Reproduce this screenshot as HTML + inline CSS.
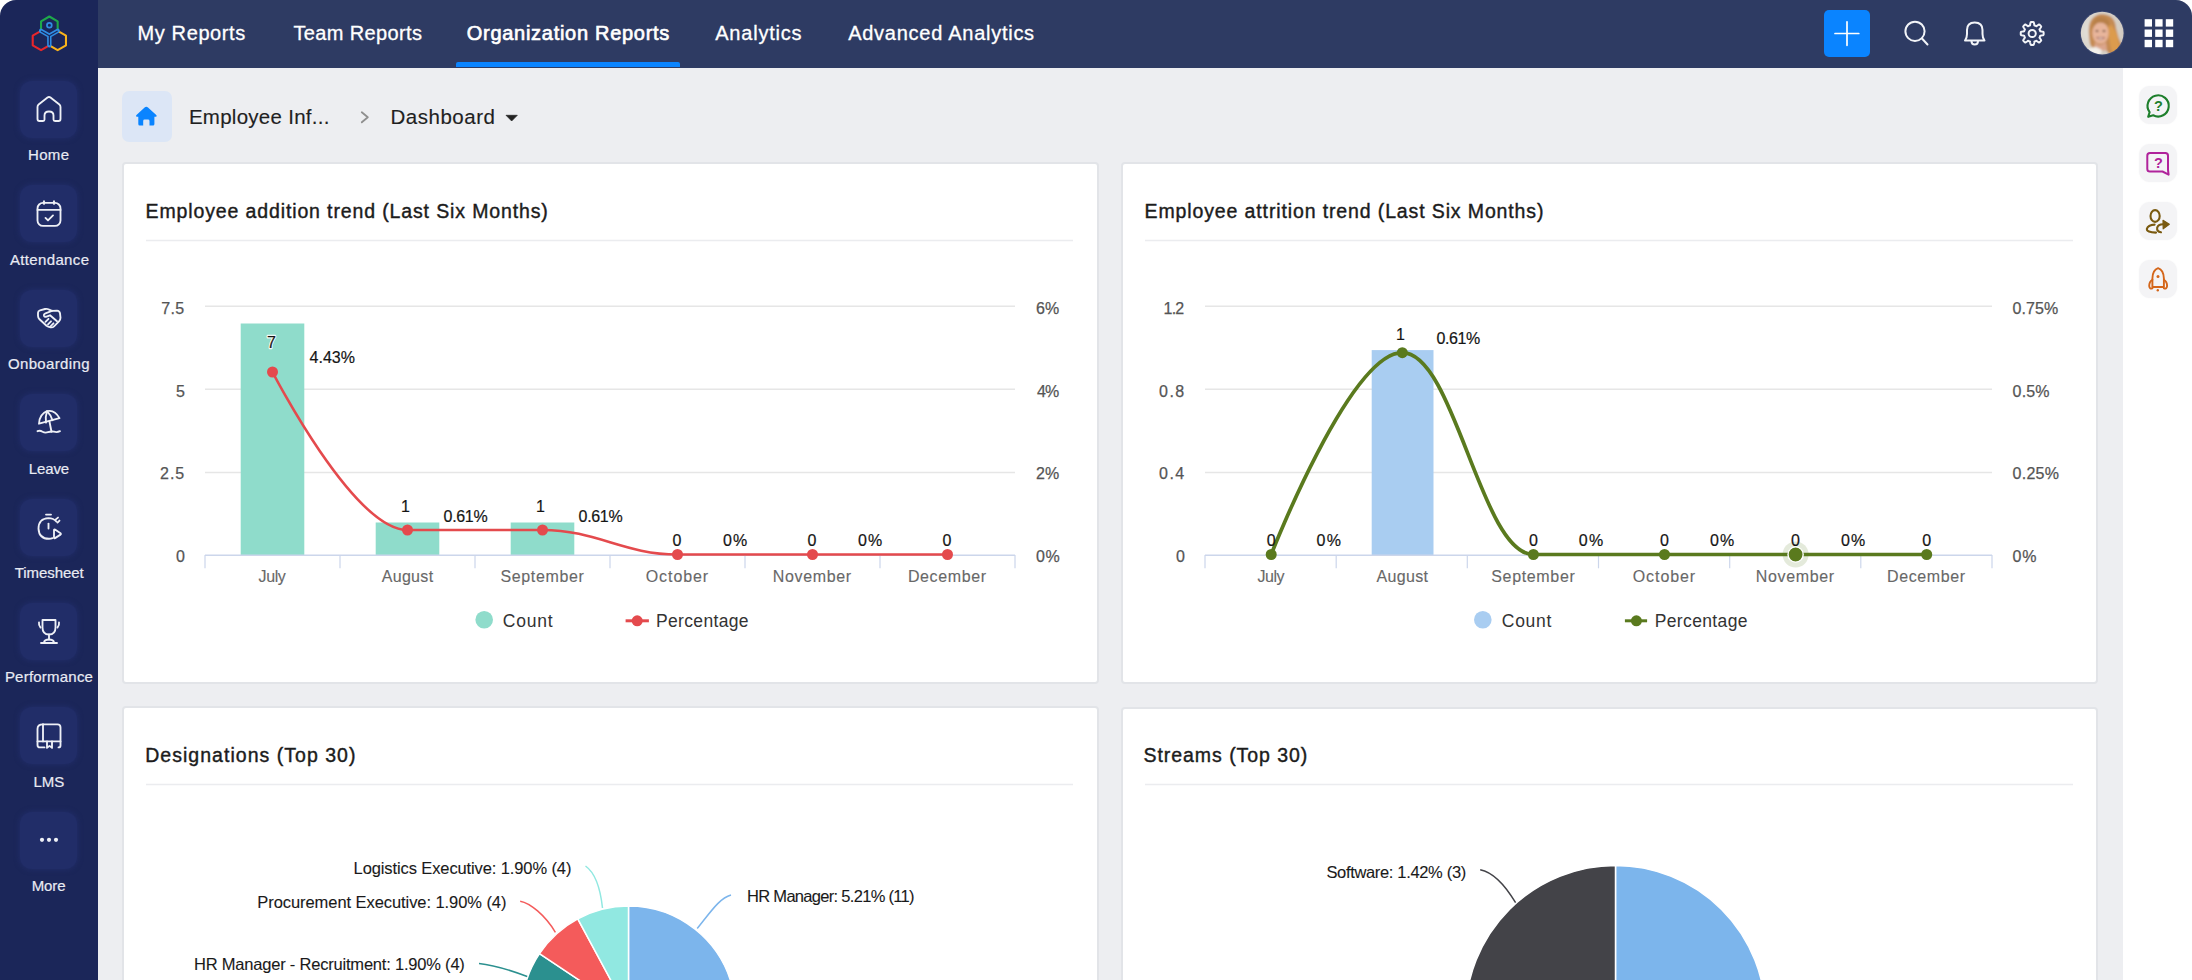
<!DOCTYPE html>
<html><head><meta charset='utf-8'><style>
*{margin:0;padding:0;box-sizing:border-box}
html,body{width:2192px;height:980px;overflow:hidden;background:#fff;font-family:"Liberation Sans", sans-serif}
.abs{position:absolute}
#app{position:absolute;left:0;top:0;width:2192px;height:980px;overflow:hidden;border-radius:16px 16px 0 0;background:#edeef1}
#sb{position:absolute;left:0;top:0;width:98px;height:980px;background:#1b2659}
#nav{position:absolute;left:98px;top:0;width:2094px;height:68px;background:#2e3b63}
#rp{position:absolute;left:2123px;top:68px;width:69px;height:912px;background:#ffffff}
.sbbox{position:absolute;left:20px;width:57px;height:57px;border-radius:12px;background:#212d68;box-shadow:0 0 5px 1px rgba(33,45,104,0.9)}
.card{position:absolute;background:#fff;border:2px solid #e2e4e8;border-radius:4px}
.rpbox{position:absolute;left:2139px;width:38px;height:38px;border-radius:11px;background:#f4f4f6;box-shadow:0 0 2px rgba(0,0,0,0.04)}
svg text{font-family:"Liberation Sans", sans-serif}
</style></head><body>
<div id='app'>
<div id='sb'></div>
<div id='nav'></div>
<div id='rp'></div>

<div class='sbbox' style='top:81.0px'></div>
<div class='sbbox' style='top:185.4px'></div>
<div class='sbbox' style='top:289.8px'></div>
<div class='sbbox' style='top:394.2px'></div>
<div class='sbbox' style='top:498.6px'></div>
<div class='sbbox' style='top:603.0px'></div>
<div class='sbbox' style='top:707.4px'></div>
<div class='sbbox' style='top:811.8px'></div>
<div class='abs' style='left:456px;top:62px;width:224px;height:5px;background:#0a84ff;border-radius:2px 2px 0 0'></div>
<div class='abs' style='left:122px;top:91px;width:50px;height:51px;border-radius:7px;background:#dce6f6'></div>
<div class='abs' style='left:1824px;top:10px;width:46px;height:47px;border-radius:5px;background:#0a84ff'></div>
<div class='card' style='left:122px;top:162px;width:977px;height:522px'></div>
<div class='card' style='left:1121px;top:162px;width:977px;height:522px'></div>
<div class='card' style='left:122px;top:706px;width:977px;height:400px'></div>
<div class='card' style='left:1121px;top:707px;width:977px;height:400px'></div>
<div class='rpbox' style='top:86px'></div>
<div class='rpbox' style='top:144px'></div>
<div class='rpbox' style='top:202px'></div>
<div class='rpbox' style='top:260px'></div>
<svg class='abs' style='left:0;top:0' width='2192' height='980' viewBox='0 0 2192 980'>
<line x1='146' y1='240.5' x2='1073' y2='240.5' stroke='#ebecef' stroke-width='1.6'/>
<line x1='1145' y1='240.5' x2='2073' y2='240.5' stroke='#ebecef' stroke-width='1.6'/>
<line x1='146' y1='784.5' x2='1073' y2='784.5' stroke='#ebecef' stroke-width='1.6'/>
<line x1='1145' y1='784.5' x2='2073' y2='784.5' stroke='#ebecef' stroke-width='1.6'/>
<line x1='205' y1='306.2' x2='1015' y2='306.2' stroke='#e6e6e6' stroke-width='1.5'/>
<line x1='205' y1='389.3' x2='1015' y2='389.3' stroke='#e6e6e6' stroke-width='1.5'/>
<line x1='205' y1='472.4' x2='1015' y2='472.4' stroke='#e6e6e6' stroke-width='1.5'/>
<line x1='1205' y1='306.2' x2='1992' y2='306.2' stroke='#e6e6e6' stroke-width='1.5'/>
<line x1='1205' y1='389.3' x2='1992' y2='389.3' stroke='#e6e6e6' stroke-width='1.5'/>
<line x1='1205' y1='472.4' x2='1992' y2='472.4' stroke='#e6e6e6' stroke-width='1.5'/>
<rect x='240.7' y='323.5' width='63.6' height='231.6' fill='#8fdccb'/>
<rect x='375.7' y='522.5' width='63.6' height='32.6' fill='#8fdccb'/>
<rect x='510.7' y='522.5' width='63.6' height='32.6' fill='#8fdccb'/>
<rect x='1371.7' y='350.1' width='61.8' height='205.0' fill='#a9cdf1'/>
<line x1='205' y1='555.2' x2='1015' y2='555.2' stroke='#ccd6eb' stroke-width='1.5'/>
<line x1='205.0' y1='555' x2='205.0' y2='568.3' stroke='#ccd6eb' stroke-width='1.2'/>
<line x1='340.0' y1='555' x2='340.0' y2='568.3' stroke='#ccd6eb' stroke-width='1.2'/>
<line x1='475.0' y1='555' x2='475.0' y2='568.3' stroke='#ccd6eb' stroke-width='1.2'/>
<line x1='610.0' y1='555' x2='610.0' y2='568.3' stroke='#ccd6eb' stroke-width='1.2'/>
<line x1='745.0' y1='555' x2='745.0' y2='568.3' stroke='#ccd6eb' stroke-width='1.2'/>
<line x1='880.0' y1='555' x2='880.0' y2='568.3' stroke='#ccd6eb' stroke-width='1.2'/>
<line x1='1015.0' y1='555' x2='1015.0' y2='568.3' stroke='#ccd6eb' stroke-width='1.2'/>
<line x1='1205' y1='555.2' x2='1992' y2='555.2' stroke='#ccd6eb' stroke-width='1.5'/>
<line x1='1205.0' y1='555' x2='1205.0' y2='568.3' stroke='#ccd6eb' stroke-width='1.2'/>
<line x1='1336.2' y1='555' x2='1336.2' y2='568.3' stroke='#ccd6eb' stroke-width='1.2'/>
<line x1='1467.3' y1='555' x2='1467.3' y2='568.3' stroke='#ccd6eb' stroke-width='1.2'/>
<line x1='1598.5' y1='555' x2='1598.5' y2='568.3' stroke='#ccd6eb' stroke-width='1.2'/>
<line x1='1729.7' y1='555' x2='1729.7' y2='568.3' stroke='#ccd6eb' stroke-width='1.2'/>
<line x1='1860.8' y1='555' x2='1860.8' y2='568.3' stroke='#ccd6eb' stroke-width='1.2'/>
<line x1='1992.0' y1='555' x2='1992.0' y2='568.3' stroke='#ccd6eb' stroke-width='1.2'/>
<path d='M272.5,372.0 C272.5,372.0 353.5,530.0 407.5,530.0 C461.5,530.0 488.5,530.0 542.5,530.0 C596.5,530.0 623.5,554.5 677.5,554.5 C731.5,554.5 758.5,554.5 812.5,554.5 C866.5,554.5 947.5,554.5 947.5,554.5' fill='none' stroke='#e44a4d' stroke-width='2.6'/>
<circle cx='272.5' cy='372' r='5.5' fill='#e44a4d'/>
<circle cx='407.5' cy='530' r='5.5' fill='#e44a4d'/>
<circle cx='542.5' cy='530' r='5.5' fill='#e44a4d'/>
<circle cx='677.5' cy='554.5' r='5.5' fill='#e44a4d'/>
<circle cx='812.5' cy='554.5' r='5.5' fill='#e44a4d'/>
<circle cx='947.5' cy='554.5' r='5.5' fill='#e44a4d'/>
<path d='M1271.2,554.5 C1271.2,554.5 1349.9,352.7 1402.3,352.7 C1454.7,352.7 1481.0,554.5 1533.4,554.5 C1585.8,554.5 1612.1,554.5 1664.5,554.5 C1716.9,554.5 1743.2,554.5 1795.6,554.5 C1848.0,554.5 1926.7,554.5 1926.7,554.5' fill='none' stroke='#5a7a1e' stroke-width='3.7'/>
<circle cx='1271.2' cy='554.5' r='5.5' fill='#5a7a1e'/>
<circle cx='1402.3' cy='352.7' r='5.5' fill='#5a7a1e'/>
<circle cx='1533.4' cy='554.5' r='5.5' fill='#5a7a1e'/>
<circle cx='1664.5' cy='554.5' r='5.5' fill='#5a7a1e'/>
<circle cx='1795.6' cy='554.5' r='13' fill='#5a7a1e' fill-opacity='0.16'/>
<circle cx='1795.6' cy='554.5' r='7.6' fill='#5a7a1e' stroke='#ffffff' stroke-width='1.4'/>
<circle cx='1926.7' cy='554.5' r='5.5' fill='#5a7a1e'/>
<circle cx='484.2' cy='619.8' r='8.8' fill='#8fdccb'/>
<line x1='625.6' y1='620.8' x2='648.9' y2='620.8' stroke='#e44a4d' stroke-width='3'/>
<circle cx='637.2' cy='620.8' r='5.5' fill='#e44a4d'/>
<circle cx='1482.8' cy='619.8' r='8.8' fill='#a9cdf1'/>
<line x1='1624.9' y1='620.8' x2='1647.1' y2='620.8' stroke='#5a7a1e' stroke-width='3'/>
<circle cx='1636.4' cy='620.8' r='5.5' fill='#5a7a1e'/>
<path d='M628.50,1013.00 L628.50,906.00 A107,107 0 0 1 732.76,988.93 Z' fill='#7cb5ec' stroke='#ffffff' stroke-width='1.5' stroke-linejoin='round'/>
<path d='M628.50,1013.00 L732.76,988.93 A107,107 0 0 1 628.50,1120.00 Z' fill='#434348' stroke='#ffffff' stroke-width='1.5' stroke-linejoin='round'/>
<path d='M628.50,1013.00 L628.50,1120.00 A107,107 0 0 1 521.94,1003.30 Z' fill='#90ed7d' stroke='#ffffff' stroke-width='1.5' stroke-linejoin='round'/>
<path d='M628.50,1013.00 L521.94,1003.30 A107,107 0 0 1 539.48,953.63 Z' fill='#2b908f' stroke='#ffffff' stroke-width='1.5' stroke-linejoin='round'/>
<path d='M628.50,1013.00 L539.48,953.63 A107,107 0 0 1 577.77,918.79 Z' fill='#f45b5b' stroke='#ffffff' stroke-width='1.5' stroke-linejoin='round'/>
<path d='M628.50,1013.00 L577.77,918.79 A107,107 0 0 1 628.50,906.00 Z' fill='#91e8e1' stroke='#ffffff' stroke-width='1.5' stroke-linejoin='round'/>
<path d='M1615.50,1015.50 L1615.50,865.50 A150,150 0 0 1 1615.50,1165.50 Z' fill='#7cb5ec' stroke='#ffffff' stroke-width='1.5' stroke-linejoin='round'/>
<path d='M1615.50,1015.50 L1615.50,1165.50 A150,150 0 0 1 1615.50,865.50 Z' fill='#434348' stroke='#ffffff' stroke-width='1.5' stroke-linejoin='round'/>
<path d='M585.5,866 C594,872 600,885 602.5,908' fill='none' stroke='#91e8e1' stroke-width='1.5'/>
<path d='M520.2,901.2 C530,903 545,915 555.4,932.3' fill='none' stroke='#f45b5b' stroke-width='1.5'/>
<path d='M479,963.4 C495,965 510,970 527.2,976.5' fill='none' stroke='#2b908f' stroke-width='1.5'/>
<path d='M731,895 C720,898 712,910 697.2,928.5' fill='none' stroke='#7cb5ec' stroke-width='1.5'/>
<path d='M1480.2,869.7 C1492,872 1505,885 1515.6,902.7' fill='none' stroke='#434348' stroke-width='1.5'/>
<path d='M41.04,30.90 L41.04,21.30 L49.35,16.50 L57.66,21.30 L57.66,30.90' stroke='#1ea84a' fill='none' stroke-width='2.1' stroke-linejoin='round' stroke-linecap='round'/><path d='M41.04,30.90 L32.72,35.70 L32.72,45.30 L41.04,50.10 L49.35,45.30' stroke='#e8262b' fill='none' stroke-width='2.1' stroke-linejoin='round' stroke-linecap='round'/><path d='M57.66,30.90 L65.98,35.70 L65.98,45.30 L57.66,50.10 L49.35,45.30' stroke='#f9b31b' fill='none' stroke-width='2.1' stroke-linejoin='round' stroke-linecap='round'/><path d='M41.04,30.90 L49.35,35.70 L57.66,30.90 M49.35,35.70 L49.35,45.30' fill='none' stroke='#2f8de4' stroke-width='4.4' stroke-linejoin='round' stroke-linecap='round'/><path d='M41.04,30.90 L49.35,35.70 L57.66,30.90 M49.35,35.70 L49.35,45.30' fill='none' stroke='#1b2659' stroke-width='1.2' stroke-linejoin='round' stroke-linecap='butt'/><circle cx='49.35' cy='25.3' r='2.4' fill='none' stroke='#2f8de4' stroke-width='1.7'/><g transform='translate(36,96.0)'><path d='M1.5,11 Q1.5,9.5 2.6,8.5 L11.5,1.6 Q13,0.5 14.5,1.6 L23.4,8.5 Q24.5,9.5 24.5,11 L24.5,23 Q24.5,25 22.5,25 L19,25 Q17.5,25 17.5,23.5 L17.5,19.5 Q17.5,15.5 13,15.5 Q8.5,15.5 8.5,19.5 L8.5,23.5 Q8.5,25 7,25 L3.5,25 Q1.5,25 1.5,23 Z' fill='none' stroke='#eef0f6' stroke-width='1.85' stroke-linecap='round' stroke-linejoin='round'/></g><g transform='translate(36,200.4)'><rect x='1.5' y='2.5' width='23' height='23' rx='5.5' fill='none' stroke='#eef0f6' stroke-width='1.85' stroke-linecap='round' stroke-linejoin='round'/><line x1='1.5' y1='9.5' x2='24.5' y2='9.5' fill='none' stroke='#eef0f6' stroke-width='1.85' stroke-linecap='round' stroke-linejoin='round'/><line x1='8' y1='0.8' x2='8' y2='3.5' fill='none' stroke='#eef0f6' stroke-width='1.85' stroke-linecap='round' stroke-linejoin='round'/><line x1='18' y1='0.8' x2='18' y2='3.5' fill='none' stroke='#eef0f6' stroke-width='1.85' stroke-linecap='round' stroke-linejoin='round'/><path d='M9.5,17.5 L12,20 L17,15' fill='none' stroke='#eef0f6' stroke-width='1.85' stroke-linecap='round' stroke-linejoin='round'/></g><g transform='translate(36,304.8)'><path d='M2,8 Q2,6 4,5.5 L9,4.2 Q11,3.7 12.5,4.5 L16,6 L21,5.8 Q23.5,6 24,8.5 L24.5,13 Q24.5,15 23,16.5 L18,21.5 Q16.5,23 14.5,22.5 Q12,22 10.5,21 L3.5,14.5 Q2,13 2,11 Z' fill='none' stroke='#eef0f6' stroke-width='1.85' stroke-linecap='round' stroke-linejoin='round'/><path d='M16,6 L9.5,8.5 Q7.5,9.3 8,11 Q8.7,12.5 10.5,11.8 L14,10.5 L21,16.5' fill='none' stroke='#eef0f6' stroke-width='1.85' stroke-linecap='round' stroke-linejoin='round'/><path d='M12,19.5 L15,16.5 M14.5,21.5 L17.5,18.5 M9.5,17 L12.5,14' fill='none' stroke='#eef0f6' stroke-width='1.85' stroke-linecap='round' stroke-linejoin='round'/></g><g transform='translate(36,409.2)'><path d='M3,14.5 Q3.5,5 11,2 Q18.5,0 23.5,9 Z' fill='none' stroke='#eef0f6' stroke-width='1.85' stroke-linecap='round' stroke-linejoin='round'/><path d='M11,2 Q9,8 10,13.5 M11,2 Q15,6 16.5,11' fill='none' stroke='#eef0f6' stroke-width='1.85' stroke-linecap='round' stroke-linejoin='round'/><path d='M13.5,12.5 L15.5,22.5' fill='none' stroke='#eef0f6' stroke-width='1.85' stroke-linecap='round' stroke-linejoin='round'/><path d='M1.5,22 Q4,21 6.5,22.5 Q9,24 12,23 Q15,22 18,22.5 Q21,23.5 24,22' fill='none' stroke='#eef0f6' stroke-width='1.85' stroke-linecap='round' stroke-linejoin='round'/></g><g transform='translate(36,513.6)'><path d='M16.5,24.5 Q15,25.2 13,25.2 Q3,25.2 2.5,15 Q2.5,5 12.5,4.5 Q17.5,4.5 20.5,8' fill='none' stroke='#eef0f6' stroke-width='1.85' stroke-linecap='round' stroke-linejoin='round'/><line x1='10' y1='1' x2='15' y2='1' fill='none' stroke='#eef0f6' stroke-width='1.85' stroke-linecap='round' stroke-linejoin='round'/><line x1='12.5' y1='10' x2='12.5' y2='15' fill='none' stroke='#eef0f6' stroke-width='1.85' stroke-linecap='round' stroke-linejoin='round'/><path d='M19.5,6 L22,4 M21.5,9 L23.5,7' fill='none' stroke='#eef0f6' stroke-width='1.85' stroke-linecap='round' stroke-linejoin='round'/><path d='M18,16.5 L18,24 Q18,25 19,24.5 L24.5,21 Q25.3,20.3 24.5,19.6 L19,16 Q18,15.5 18,16.5 Z' fill='none' stroke='#eef0f6' stroke-width='1.85' stroke-linecap='round' stroke-linejoin='round'/></g><g transform='translate(36,618.0)'><path d='M6.5,2 L19.5,2 L19.5,9.5 Q19.5,16.5 13,16.5 Q6.5,16.5 6.5,9.5 Z' fill='none' stroke='#eef0f6' stroke-width='1.85' stroke-linecap='round' stroke-linejoin='round'/><path d='M3,4.5 Q2.5,7.5 4.5,9.5 M23,4.5 Q23.5,7.5 21.5,9.5' fill='none' stroke='#eef0f6' stroke-width='1.85' stroke-linecap='round' stroke-linejoin='round'/><line x1='13' y1='16.5' x2='13' y2='21.5' fill='none' stroke='#eef0f6' stroke-width='1.85' stroke-linecap='round' stroke-linejoin='round'/><path d='M8,24.5 Q8.5,21.5 13,21.5 Q17.5,21.5 18,24.5' fill='none' stroke='#eef0f6' stroke-width='1.85' stroke-linecap='round' stroke-linejoin='round'/><line x1='5' y1='25' x2='21' y2='25' fill='none' stroke='#eef0f6' stroke-width='1.85' stroke-linecap='round' stroke-linejoin='round'/></g><g transform='translate(36,722.4)'><path d='M7,2 L21.5,2 Q24.5,2 24.5,5 L24.5,23 Q24.5,25 22.5,25' fill='none' stroke='#eef0f6' stroke-width='1.85' stroke-linecap='round' stroke-linejoin='round'/><path d='M7,2 Q1.5,2 1.5,6.5 L1.5,22.5 Q1.5,25 4,25 L8.5,25' fill='none' stroke='#eef0f6' stroke-width='1.85' stroke-linecap='round' stroke-linejoin='round'/><line x1='7' y1='2' x2='7' y2='19' fill='none' stroke='#eef0f6' stroke-width='1.85' stroke-linecap='round' stroke-linejoin='round'/><line x1='1.5' y1='19' x2='24.5' y2='19' fill='none' stroke='#eef0f6' stroke-width='1.85' stroke-linecap='round' stroke-linejoin='round'/><path d='M11,19 L11,25.5 L13.5,23.5 L16,25.5 L16,19' fill='none' stroke='#eef0f6' stroke-width='1.85' stroke-linecap='round' stroke-linejoin='round'/></g><g transform='translate(36,826.8)'><circle cx='6' cy='13' r='2.1' fill='#eef0f6'/><circle cx='13' cy='13' r='2.1' fill='#eef0f6'/><circle cx='20' cy='13' r='2.1' fill='#eef0f6'/></g><path d='M146.3,106.8 Q147.2,106.8 148,107.5 L156.5,115.3 Q157.2,116.8 155.5,116.8 L154.4,116.8 L154.4,124 Q154.4,125.5 153,125.5 L149.5,125.5 L149.5,121 Q149.5,119.6 148,119.6 L144.6,119.6 Q143.2,119.6 143.2,121 L143.2,125.5 L139.7,125.5 Q138.3,125.5 138.3,124 L138.3,116.8 L137.2,116.8 Q135.5,116.8 136.2,115.3 L144.6,107.5 Q145.4,106.8 146.3,106.8 Z' fill='#0a84ff'/><path d='M361.8,112.3 L367.8,117.3 L361.8,122.3' fill='none' stroke='#8f8f8f' stroke-width='1.8' stroke-linecap='round' stroke-linejoin='round'/><path d='M506,115.3 L517.3,115.3 L511.65,121 Z' fill='#222' stroke='#222' stroke-width='0.7' stroke-linejoin='round'/><path d='M1835,33.5 L1858.8,33.5 M1847,21.8 L1847,45.3' fill='none' stroke='#fff' stroke-width='1.7' stroke-linecap='round'/><circle cx='1915' cy='31.3' r='9.6' fill='none' stroke='#f2f4f8' stroke-width='2' stroke-linecap='round' stroke-linejoin='round'/><line x1='1922' y1='38.5' x2='1927.5' y2='44.5' fill='none' stroke='#f2f4f8' stroke-width='2' stroke-linecap='round' stroke-linejoin='round'/><path d='M1965,40.5 L1984.5,40.5 Q1982.5,38 1982.5,34 L1982.5,30 Q1982.5,22.5 1974.7,22.5 Q1967,22.5 1967,30 L1967,34 Q1967,38 1965,40.5 Z' fill='none' stroke='#f2f4f8' stroke-width='2' stroke-linecap='round' stroke-linejoin='round'/><path d='M1971.5,41 Q1971.5,44.5 1974.7,44.5 Q1978,44.5 1978,41' fill='none' stroke='#f2f4f8' stroke-width='2' stroke-linecap='round' stroke-linejoin='round'/><path d='M2043.65,33.50 L2043.65,33.80 L2043.63,34.10 L2043.61,34.40 L2043.59,34.70 L2043.48,34.98 L2042.88,35.19 L2042.24,35.36 L2041.58,35.49 L2040.94,35.60 L2040.34,35.68 L2040.21,35.87 L2040.14,36.08 L2040.07,36.29 L2040.00,36.49 L2039.91,36.70 L2039.83,36.90 L2039.74,37.09 L2039.64,37.29 L2039.54,37.48 L2039.50,37.71 L2039.87,38.20 L2040.24,38.72 L2040.61,39.28 L2040.95,39.85 L2041.22,40.42 L2041.10,40.71 L2040.91,40.94 L2040.71,41.16 L2040.51,41.38 L2040.30,41.60 L2040.08,41.81 L2039.86,42.01 L2039.64,42.21 L2039.41,42.40 L2039.12,42.52 L2038.55,42.25 L2037.98,41.91 L2037.42,41.54 L2036.90,41.17 L2036.41,40.80 L2036.18,40.84 L2035.99,40.94 L2035.79,41.04 L2035.60,41.13 L2035.40,41.21 L2035.19,41.30 L2034.99,41.37 L2034.78,41.44 L2034.57,41.51 L2034.38,41.64 L2034.30,42.24 L2034.19,42.88 L2034.06,43.54 L2033.89,44.18 L2033.68,44.78 L2033.40,44.89 L2033.10,44.91 L2032.80,44.93 L2032.50,44.95 L2032.20,44.95 L2031.90,44.95 L2031.60,44.93 L2031.30,44.91 L2031.00,44.89 L2030.72,44.78 L2030.51,44.18 L2030.34,43.54 L2030.21,42.88 L2030.10,42.24 L2030.02,41.64 L2029.83,41.51 L2029.62,41.44 L2029.41,41.37 L2029.21,41.30 L2029.00,41.21 L2028.80,41.13 L2028.61,41.04 L2028.41,40.94 L2028.22,40.84 L2027.99,40.80 L2027.50,41.17 L2026.98,41.54 L2026.42,41.91 L2025.85,42.25 L2025.28,42.52 L2024.99,42.40 L2024.76,42.21 L2024.54,42.01 L2024.32,41.81 L2024.10,41.60 L2023.89,41.38 L2023.69,41.16 L2023.49,40.94 L2023.30,40.71 L2023.18,40.42 L2023.45,39.85 L2023.79,39.28 L2024.16,38.72 L2024.53,38.20 L2024.90,37.71 L2024.86,37.48 L2024.76,37.29 L2024.66,37.09 L2024.57,36.90 L2024.49,36.70 L2024.40,36.49 L2024.33,36.29 L2024.26,36.08 L2024.19,35.87 L2024.06,35.68 L2023.46,35.60 L2022.82,35.49 L2022.16,35.36 L2021.52,35.19 L2020.92,34.98 L2020.81,34.70 L2020.79,34.40 L2020.77,34.10 L2020.75,33.80 L2020.75,33.50 L2020.75,33.20 L2020.77,32.90 L2020.79,32.60 L2020.81,32.30 L2020.92,32.02 L2021.52,31.81 L2022.16,31.64 L2022.82,31.51 L2023.46,31.40 L2024.06,31.32 L2024.19,31.13 L2024.26,30.92 L2024.33,30.71 L2024.40,30.51 L2024.49,30.30 L2024.57,30.10 L2024.66,29.91 L2024.76,29.71 L2024.86,29.52 L2024.90,29.29 L2024.53,28.80 L2024.16,28.28 L2023.79,27.72 L2023.45,27.15 L2023.18,26.58 L2023.30,26.29 L2023.49,26.06 L2023.69,25.84 L2023.89,25.62 L2024.10,25.40 L2024.32,25.19 L2024.54,24.99 L2024.76,24.79 L2024.99,24.60 L2025.28,24.48 L2025.85,24.75 L2026.42,25.09 L2026.98,25.46 L2027.50,25.83 L2027.99,26.20 L2028.22,26.16 L2028.41,26.06 L2028.61,25.96 L2028.80,25.87 L2029.00,25.79 L2029.21,25.70 L2029.41,25.63 L2029.62,25.56 L2029.83,25.49 L2030.02,25.36 L2030.10,24.76 L2030.21,24.12 L2030.34,23.46 L2030.51,22.82 L2030.72,22.22 L2031.00,22.11 L2031.30,22.09 L2031.60,22.07 L2031.90,22.05 L2032.20,22.05 L2032.50,22.05 L2032.80,22.07 L2033.10,22.09 L2033.40,22.11 L2033.68,22.22 L2033.89,22.82 L2034.06,23.46 L2034.19,24.12 L2034.30,24.76 L2034.38,25.36 L2034.57,25.49 L2034.78,25.56 L2034.99,25.63 L2035.19,25.70 L2035.40,25.79 L2035.60,25.87 L2035.79,25.96 L2035.99,26.06 L2036.18,26.16 L2036.41,26.20 L2036.90,25.83 L2037.42,25.46 L2037.98,25.09 L2038.55,24.75 L2039.12,24.48 L2039.41,24.60 L2039.64,24.79 L2039.86,24.99 L2040.08,25.19 L2040.30,25.40 L2040.51,25.62 L2040.71,25.84 L2040.91,26.06 L2041.10,26.29 L2041.22,26.58 L2040.95,27.15 L2040.61,27.72 L2040.24,28.28 L2039.87,28.80 L2039.50,29.29 L2039.54,29.52 L2039.64,29.71 L2039.74,29.91 L2039.83,30.10 L2039.91,30.30 L2040.00,30.51 L2040.07,30.71 L2040.14,30.92 L2040.21,31.13 L2040.34,31.32 L2040.94,31.40 L2041.58,31.51 L2042.24,31.64 L2042.88,31.81 L2043.48,32.02 L2043.59,32.30 L2043.61,32.60 L2043.63,32.90 L2043.65,33.20 Z' fill='none' stroke='#f2f4f8' stroke-width='2' stroke-linecap='round' stroke-linejoin='round'/><circle cx='2032.2' cy='33.5' r='3.6' fill='none' stroke='#f2f4f8' stroke-width='2' stroke-linecap='round' stroke-linejoin='round'/><rect x='2144.6' y='19.2' width='7.4' height='7.4' fill='#fff'/><rect x='2144.6' y='29.5' width='7.4' height='7.4' fill='#fff'/><rect x='2144.6' y='39.8' width='7.4' height='7.4' fill='#fff'/><rect x='2155.2' y='19.2' width='7.4' height='7.4' fill='#fff'/><rect x='2155.2' y='29.5' width='7.4' height='7.4' fill='#fff'/><rect x='2155.2' y='39.8' width='7.4' height='7.4' fill='#fff'/><rect x='2165.8' y='19.2' width='7.4' height='7.4' fill='#fff'/><rect x='2165.8' y='29.5' width='7.4' height='7.4' fill='#fff'/><rect x='2165.8' y='39.8' width='7.4' height='7.4' fill='#fff'/><defs><clipPath id='avc'><circle cx='2102.2' cy='33.1' r='21.4'/></clipPath><filter id='avb' x='-20%' y='-20%' width='140%' height='140%'><feGaussianBlur stdDeviation='0.9'/></filter><radialGradient id='avbg' cx='0.35' cy='0.45' r='0.75'><stop offset='0' stop-color='#e9e6e0'/><stop offset='1' stop-color='#c9c1b6'/></radialGradient></defs><circle cx='2102.2' cy='33.1' r='22.4' fill='#3b4770'/><g clip-path='url(#avc)'><g filter='url(#avb)'><rect x='2078' y='9' width='50' height='50' fill='url(#avbg)'/><path d='M2089,36 Q2087,16 2101,14 Q2115,14 2116,28 Q2118,38 2122,46 Q2121,56 2112,57 L2106,50 Q2093,52 2090,44 Z' fill='#c58b52'/><path d='M2108,22 Q2118,30 2119,44 Q2121,54 2114,57 Q2110,48 2109,38 Z' fill='#dc9b4e'/><ellipse cx='2100.5' cy='33' rx='8.2' ry='10.8' fill='#e8b59b'/><path d='M2095,42 Q2100,48 2106,42 L2107,50 Q2100,52 2094,49 Z' fill='#dba58c'/><path d='M2082,58 Q2086,47 2096,47 L2102,50 Q2100,56 2098,58 Z' fill='#f3f1ec'/><path d='M2092,30 Q2092,17 2101,17 Q2110,17 2110,27 Q2105,22 2099,22.5 Q2094,24 2092,30 Z' fill='#b88048'/><ellipse cx='2097' cy='31' rx='1.5' ry='1' fill='#6b4a3a'/><ellipse cx='2104' cy='31' rx='1.5' ry='1' fill='#6b4a3a'/><path d='M2096.5,37.5 Q2100.5,41.5 2105,37.5 Z' fill='#f2e4de' stroke='#a86a5c' stroke-width='0.9'/></g></g><path d='M2149.6,112.2 A10.6,10.6 0 1 1 2153.2,115.3 L2148.2,116.8 Z' fill='none' stroke='#1e7f2c' stroke-width='2.1' stroke-linejoin='round'/><text x='2154' y='110.5' style='font-size:14.5px;font-weight:700;fill:#1e7f2c'>?</text><path d='M2150,153 Q2147.3,153 2147.3,155.7 L2147.3,169 Q2147.3,171.5 2150,171.5 L2162.5,171.5 L2168.6,174.6 L2168,170 L2168,155.7 Q2168,153 2165.3,153 Z' fill='none' stroke='#b0239b' stroke-width='2' stroke-linejoin='round'/><text x='2154' y='167.8' style='font-size:14.5px;font-weight:700;fill:#b0239b'>?</text><ellipse cx='2155.1' cy='216' rx='4.6' ry='5.9' fill='none' stroke='#7a5a10' stroke-width='2.1'/><path d='M2154.6,224.6 Q2148,225 2146.9,228.8 Q2146.5,232.4 2156,232.6' fill='none' stroke='#7a5a10' stroke-width='2.1' stroke-linecap='round'/><path d='M2161,232.3 Q2156.5,231.5 2157.2,227.6 Q2158.2,224.4 2163,224.3' fill='none' stroke='#7a5a10' stroke-width='2.1' stroke-linecap='round'/><path d='M2163,220.3 L2169.3,224.3 L2163.2,228.8 Z' fill='#7a5a10' stroke='#7a5a10' stroke-width='1.2' stroke-linejoin='round'/><path d='M2152.4,287 L2152.4,278.5 Q2152.6,270 2158.1,268.2 Q2163.6,270 2163.9,278.5 L2163.9,287 Z' fill='none' stroke='#d4661a' stroke-width='1.9' stroke-linejoin='round'/><path d='M2152.4,279.8 Q2149.2,281.5 2149.2,286 Q2149.5,289.2 2152.4,288.3 M2163.9,279.8 Q2167.1,281.5 2167.1,286 Q2166.8,289.2 2163.9,288.3' fill='none' stroke='#d4661a' stroke-width='1.9' stroke-linejoin='round' stroke-linecap='round'/><circle cx='2158' cy='276.4' r='1.5' fill='#d4661a'/><circle cx='2157.8' cy='290.3' r='1.2' fill='#d4661a'/>
<text x='137.6' y='39.5' style='font-size:20px;letter-spacing:0.600px;fill:#ffffff;stroke:#ffffff;stroke-width:0.3px'>My Reports</text>
<text x='293.5' y='39.5' style='font-size:20px;letter-spacing:0.364px;fill:#ffffff;stroke:#ffffff;stroke-width:0.3px'>Team Reports</text>
<text x='466.8' y='39.5' style='font-size:20px;letter-spacing:0.711px;fill:#ffffff;stroke:#ffffff;stroke-width:0.65px'>Organization Reports</text>
<text x='715.2' y='39.5' style='font-size:20px;letter-spacing:0.800px;fill:#ffffff;stroke:#ffffff;stroke-width:0.3px'>Analytics</text>
<text x='848.2' y='39.5' style='font-size:20px;letter-spacing:0.735px;fill:#ffffff;stroke:#ffffff;stroke-width:0.3px'>Advanced Analytics</text>
<text x='188.9' y='124.0' style='font-size:20.5px;letter-spacing:0.271px;fill:#1f1f1f;stroke:#1f1f1f;stroke-width:0.15px'>Employee Inf...</text>
<text x='390.4' y='124.0' style='font-size:20.5px;letter-spacing:0.538px;fill:#1f1f1f;stroke:#1f1f1f;stroke-width:0.15px'>Dashboard</text>
<text x='28.0' y='160.3' style='font-size:15px;letter-spacing:0.333px;fill:#e9ebf3;stroke:#e9ebf3;stroke-width:0.2px'>Home</text>
<text x='9.9' y='264.7' style='font-size:15px;letter-spacing:0.356px;fill:#e9ebf3;stroke:#e9ebf3;stroke-width:0.2px'>Attendance</text>
<text x='7.9' y='369.1' style='font-size:15px;letter-spacing:0.367px;fill:#e9ebf3;stroke:#e9ebf3;stroke-width:0.2px'>Onboarding</text>
<text x='28.7' y='473.5' style='font-size:15px;letter-spacing:-0.098px;fill:#e9ebf3;stroke:#e9ebf3;stroke-width:0.2px'>Leave</text>
<text x='14.8' y='577.9' style='font-size:15px;letter-spacing:-0.086px;fill:#e9ebf3;stroke:#e9ebf3;stroke-width:0.2px'>Timesheet</text>
<text x='4.9' y='682.3' style='font-size:15px;letter-spacing:0.220px;fill:#e9ebf3;stroke:#e9ebf3;stroke-width:0.2px'>Performance</text>
<text x='33.6' y='786.7' style='font-size:15px;letter-spacing:-0.145px;fill:#e9ebf3;stroke:#e9ebf3;stroke-width:0.2px'>LMS</text>
<text x='31.7' y='891.1' style='font-size:15px;letter-spacing:-0.110px;fill:#e9ebf3;stroke:#e9ebf3;stroke-width:0.2px'>More</text>
<text x='145.6' y='218.0' style='font-size:19.5px;letter-spacing:0.870px;fill:#1c1c1c;stroke:#1c1c1c;stroke-width:0.4px'>Employee addition trend (Last Six Months)</text>
<text x='1144.6' y='217.5' style='font-size:19.5px;letter-spacing:0.873px;fill:#1c1c1c;stroke:#1c1c1c;stroke-width:0.4px'>Employee attrition trend (Last Six Months)</text>
<text x='145.2' y='761.5' style='font-size:19.5px;letter-spacing:1.030px;fill:#1c1c1c;stroke:#1c1c1c;stroke-width:0.4px'>Designations (Top 30)</text>
<text x='1143.5' y='762.0' style='font-size:19.5px;letter-spacing:0.953px;fill:#1c1c1c;stroke:#1c1c1c;stroke-width:0.4px'>Streams (Top 30)</text>
<text x='161.2' y='313.9' style='font-size:16px;letter-spacing:0.400px;fill:#555555;stroke:#555555;stroke-width:0.25px'>7.5</text>
<text x='176.0' y='396.5' style='font-size:16px;letter-spacing:0.000px;fill:#555555;stroke:#555555;stroke-width:0.25px'>5</text>
<text x='160.1' y='479.2' style='font-size:16px;letter-spacing:0.950px;fill:#555555;stroke:#555555;stroke-width:0.25px'>2.5</text>
<text x='176.0' y='561.8' style='font-size:16px;letter-spacing:0.000px;fill:#555555;stroke:#555555;stroke-width:0.25px'>0</text>
<text x='1035.9' y='313.9' style='font-size:16px;letter-spacing:0.100px;fill:#555555;stroke:#555555;stroke-width:0.25px'>6%</text>
<text x='1036.9' y='396.5' style='font-size:16px;letter-spacing:-0.700px;fill:#555555;stroke:#555555;stroke-width:0.25px'>4%</text>
<text x='1035.9' y='479.2' style='font-size:16px;letter-spacing:0.300px;fill:#555555;stroke:#555555;stroke-width:0.25px'>2%</text>
<text x='1035.9' y='561.8' style='font-size:16px;letter-spacing:0.800px;fill:#555555;stroke:#555555;stroke-width:0.25px'>0%</text>
<text x='258.6' y='581.7' style='font-size:16px;letter-spacing:-0.433px;fill:#686868;stroke:#686868;stroke-width:0.12px'>July</text>
<text x='381.7' y='581.7' style='font-size:16px;letter-spacing:0.320px;fill:#686868;stroke:#686868;stroke-width:0.12px'>August</text>
<text x='500.4' y='581.7' style='font-size:16px;letter-spacing:0.650px;fill:#686868;stroke:#686868;stroke-width:0.12px'>September</text>
<text x='645.7' y='581.7' style='font-size:16px;letter-spacing:0.933px;fill:#686868;stroke:#686868;stroke-width:0.12px'>October</text>
<text x='772.8' y='581.7' style='font-size:16px;letter-spacing:0.643px;fill:#686868;stroke:#686868;stroke-width:0.12px'>November</text>
<text x='907.9' y='581.7' style='font-size:16px;letter-spacing:0.614px;fill:#686868;stroke:#686868;stroke-width:0.12px'>December</text>
<text x='1163.5' y='313.9' style='font-size:16px;letter-spacing:-0.750px;fill:#555555;stroke:#555555;stroke-width:0.25px'>1.2</text>
<text x='1159.1' y='396.5' style='font-size:16px;letter-spacing:1.450px;fill:#555555;stroke:#555555;stroke-width:0.25px'>0.8</text>
<text x='1159.1' y='479.2' style='font-size:16px;letter-spacing:1.450px;fill:#555555;stroke:#555555;stroke-width:0.25px'>0.4</text>
<text x='1176.0' y='561.8' style='font-size:16px;letter-spacing:0.000px;fill:#555555;stroke:#555555;stroke-width:0.25px'>0</text>
<text x='2012.6' y='313.9' style='font-size:16px;letter-spacing:0.050px;fill:#555555;stroke:#555555;stroke-width:0.25px'>0.75%</text>
<text x='2012.6' y='396.5' style='font-size:16px;letter-spacing:0.167px;fill:#555555;stroke:#555555;stroke-width:0.25px'>0.5%</text>
<text x='2012.6' y='479.2' style='font-size:16px;letter-spacing:0.250px;fill:#555555;stroke:#555555;stroke-width:0.25px'>0.25%</text>
<text x='2012.6' y='561.8' style='font-size:16px;letter-spacing:0.800px;fill:#555555;stroke:#555555;stroke-width:0.25px'>0%</text>
<text x='1257.4' y='581.7' style='font-size:16px;letter-spacing:-0.433px;fill:#686868;stroke:#686868;stroke-width:0.12px'>July</text>
<text x='1376.5' y='581.7' style='font-size:16px;letter-spacing:0.320px;fill:#686868;stroke:#686868;stroke-width:0.12px'>August</text>
<text x='1491.3' y='581.7' style='font-size:16px;letter-spacing:0.650px;fill:#686868;stroke:#686868;stroke-width:0.12px'>September</text>
<text x='1632.7' y='581.7' style='font-size:16px;letter-spacing:0.933px;fill:#686868;stroke:#686868;stroke-width:0.12px'>October</text>
<text x='1755.8' y='581.7' style='font-size:16px;letter-spacing:0.643px;fill:#686868;stroke:#686868;stroke-width:0.12px'>November</text>
<text x='1887.0' y='581.7' style='font-size:16px;letter-spacing:0.614px;fill:#686868;stroke:#686868;stroke-width:0.12px'>December</text>
<text x='267.0' y='348.0' style='font-size:16px;letter-spacing:0.000px;fill:#fff;stroke:#fff;stroke-width:2.4px;stroke-linejoin:round;opacity:0.85'>7</text>
<text x='267.0' y='348.0' style='font-size:16px;letter-spacing:0.000px;fill:#151515;stroke:#151515;stroke-width:0.2px'>7</text>
<text x='309.6' y='363.0' style='font-size:16px;letter-spacing:-0.025px;fill:#151515;stroke:#151515;stroke-width:0.2px'>4.43%</text>
<text x='401.0' y='512.4' style='font-size:16px;letter-spacing:0.000px;fill:#151515;stroke:#151515;stroke-width:0.2px'>1</text>
<text x='443.6' y='521.5' style='font-size:16px;letter-spacing:-0.325px;fill:#151515;stroke:#151515;stroke-width:0.2px'>0.61%</text>
<text x='536.0' y='512.4' style='font-size:16px;letter-spacing:0.000px;fill:#151515;stroke:#151515;stroke-width:0.2px'>1</text>
<text x='578.6' y='521.5' style='font-size:16px;letter-spacing:-0.325px;fill:#151515;stroke:#151515;stroke-width:0.2px'>0.61%</text>
<text x='672.5' y='546.0' style='font-size:16px;letter-spacing:0.000px;fill:#151515;stroke:#151515;stroke-width:0.2px'>0</text>
<text x='807.5' y='546.0' style='font-size:16px;letter-spacing:0.000px;fill:#151515;stroke:#151515;stroke-width:0.2px'>0</text>
<text x='942.5' y='546.0' style='font-size:16px;letter-spacing:0.000px;fill:#151515;stroke:#151515;stroke-width:0.2px'>0</text>
<text x='722.9' y='546.0' style='font-size:16px;letter-spacing:1.200px;fill:#151515;stroke:#151515;stroke-width:0.2px'>0%</text>
<text x='857.9' y='546.0' style='font-size:16px;letter-spacing:1.200px;fill:#151515;stroke:#151515;stroke-width:0.2px'>0%</text>
<text x='1266.7' y='546.0' style='font-size:16px;letter-spacing:0.000px;fill:#151515;stroke:#151515;stroke-width:0.2px'>0</text>
<text x='1528.9' y='546.0' style='font-size:16px;letter-spacing:0.000px;fill:#151515;stroke:#151515;stroke-width:0.2px'>0</text>
<text x='1660.0' y='546.0' style='font-size:16px;letter-spacing:0.000px;fill:#151515;stroke:#151515;stroke-width:0.2px'>0</text>
<text x='1791.1' y='546.0' style='font-size:16px;letter-spacing:0.000px;fill:#151515;stroke:#151515;stroke-width:0.2px'>0</text>
<text x='1922.2' y='546.0' style='font-size:16px;letter-spacing:0.000px;fill:#151515;stroke:#151515;stroke-width:0.2px'>0</text>
<text x='1316.6' y='546.0' style='font-size:16px;letter-spacing:1.200px;fill:#151515;stroke:#151515;stroke-width:0.2px'>0%</text>
<text x='1578.8' y='546.0' style='font-size:16px;letter-spacing:1.200px;fill:#151515;stroke:#151515;stroke-width:0.2px'>0%</text>
<text x='1709.9' y='546.0' style='font-size:16px;letter-spacing:1.200px;fill:#151515;stroke:#151515;stroke-width:0.2px'>0%</text>
<text x='1841.0' y='546.0' style='font-size:16px;letter-spacing:1.200px;fill:#151515;stroke:#151515;stroke-width:0.2px'>0%</text>
<text x='1396.0' y='340.0' style='font-size:16px;letter-spacing:0.000px;fill:#fff;stroke:#fff;stroke-width:2.4px;stroke-linejoin:round;opacity:0.85'>1</text>
<text x='1396.0' y='340.0' style='font-size:16px;letter-spacing:0.000px;fill:#151515;stroke:#151515;stroke-width:0.2px'>1</text>
<text x='1436.6' y='344.0' style='font-size:16px;letter-spacing:-0.450px;fill:#151515;stroke:#151515;stroke-width:0.2px'>0.61%</text>
<text x='502.8' y='626.7' style='font-size:17.5px;letter-spacing:0.800px;fill:#333333'>Count</text>
<text x='656.0' y='626.7' style='font-size:17.5px;letter-spacing:0.333px;fill:#333333'>Percentage</text>
<text x='1501.8' y='626.7' style='font-size:17.5px;letter-spacing:0.725px;fill:#333333'>Count</text>
<text x='1654.7' y='626.7' style='font-size:17.5px;letter-spacing:0.367px;fill:#333333'>Percentage</text>
<text x='353.6' y='874.0' style='font-size:16.5px;letter-spacing:-0.110px;fill:#1a1a1a;stroke:#1a1a1a;stroke-width:0.1px'>Logistics Executive: 1.90% (4)</text>
<text x='257.3' y='908.2' style='font-size:16.5px;letter-spacing:-0.068px;fill:#1a1a1a;stroke:#1a1a1a;stroke-width:0.1px'>Procurement Executive: 1.90% (4)</text>
<text x='194.0' y='970.4' style='font-size:16.5px;letter-spacing:-0.206px;fill:#1a1a1a;stroke:#1a1a1a;stroke-width:0.1px'>HR Manager - Recruitment: 1.90% (4)</text>
<text x='747.0' y='902.3' style='font-size:16.5px;letter-spacing:-0.695px;fill:#1a1a1a;stroke:#1a1a1a;stroke-width:0.1px'>HR Manager: 5.21% (11)</text>
<text x='1326.4' y='877.6' style='font-size:16.5px;letter-spacing:-0.333px;fill:#1a1a1a;stroke:#1a1a1a;stroke-width:0.1px'>Software: 1.42% (3)</text>
</svg>
</div></body></html>
